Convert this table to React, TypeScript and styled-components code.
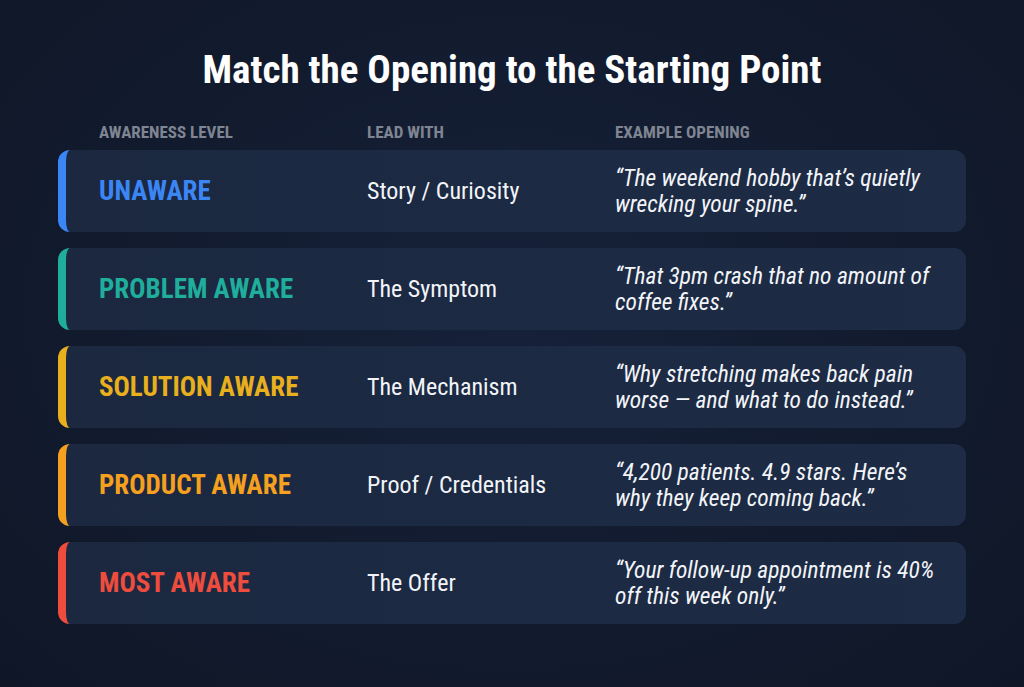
import styled, { createGlobalStyle } from "styled-components";

const GlobalStyle = createGlobalStyle`
  html, body {
    margin: 0;
    padding: 0;
    background: #111a2c;
  }
  * {
    box-sizing: border-box;
  }
`;

type Row = {
  level: string;
  color: string;
  lead: string;
  example: string;
};

const rows: Row[] = [
  {
    level: "Unaware",
    color: "#3b86f5",
    lead: "Story / Curiosity",
    example: "“The weekend hobby that’s quietly wrecking your spine.”",
  },
  {
    level: "Problem Aware",
    color: "#1fae9b",
    lead: "The Symptom",
    example: "“That 3pm crash that no amount of coffee fixes.”",
  },
  {
    level: "Solution Aware",
    color: "#e9b01d",
    lead: "The Mechanism",
    example: "“Why stretching makes back pain worse — and what to do instead.”",
  },
  {
    level: "Product Aware",
    color: "#f5a01e",
    lead: "Proof / Credentials",
    example: "“4,200 patients. 4.9 stars. Here’s why they keep coming back.”",
  },
  {
    level: "Most Aware",
    color: "#ee4d3e",
    lead: "The Offer",
    example: "“Your follow-up appointment is 40% off this week only.”",
  },
];

export default function App() {
  return (
    <Page>
      <GlobalStyle />
      <Title>Match the Opening to the Starting Point</Title>

      <HeaderRow>
        <HeadCell>Awareness Level</HeadCell>
        <HeadCell>Lead With</HeadCell>
        <HeadCell>Example Opening</HeadCell>
      </HeaderRow>

      <List>
        {rows.map((r) => (
          <Card key={r.level} $accent={r.color}>
            <Level $color={r.color}>{r.level}</Level>
            <Lead>{r.lead}</Lead>
            <Example>{r.example}</Example>
          </Card>
        ))}
      </List>
    </Page>
  );
}

const condensed = `
  font-family: "Roboto Condensed", "Liberation Sans Narrow", "DejaVu Sans Condensed", Roboto, sans-serif;
  font-stretch: condensed;
`;

const Page = styled.div`
  width: 1024px;
  height: 687px;
  padding: 46px 58px 0;
  background: radial-gradient(ellipse at 50% 45%, #16213a 0%, #121b2e 55%, #0f1727 100%);
  color: #ffffff;
  ${condensed}
  overflow: hidden;
`;

const Title = styled.h1`
  margin: 0;
  text-align: center;
  font-size: 39px;
  line-height: 48px;
  font-weight: 700;
  color: #ffffff;
`;

const Columns = `
  display: grid;
  grid-template-columns: 268px 248px 1fr;
  align-items: center;
`;

const HeaderRow = styled.div`
  ${Columns}
  margin-top: 26px;
  padding-left: 41px;
  height: 24px;
`;

const HeadCell = styled.div`
  font-size: 17px;
  font-weight: 700;
  text-transform: uppercase;
  color: #7f8592;
`;

const List = styled.div`
  display: flex;
  flex-direction: column;
  gap: 16px;
  margin-top: 6px;
`;

const Card = styled.div<{ $accent: string }>`
  ${Columns}
  height: 82px;
  padding: 0 28px 0 33px;
  background: linear-gradient(90deg, #1b2840 0%, #1d2b45 100%);
  border-left: 8px solid ${(p) => p.$accent};
  border-radius: 12px;
`;

const Level = styled.div<{ $color: string }>`
  font-size: 27px;
  font-weight: 700;
  text-transform: uppercase;
  color: ${(p) => p.$color};
`;

const Lead = styled.div`
  font-size: 24px;
  font-weight: 400;
  color: #f2f4f8;
`;

const Example = styled.div`
  font-size: 23.5px;
  line-height: 26px;
  font-style: italic;
  color: #f2f4f8;
`;
